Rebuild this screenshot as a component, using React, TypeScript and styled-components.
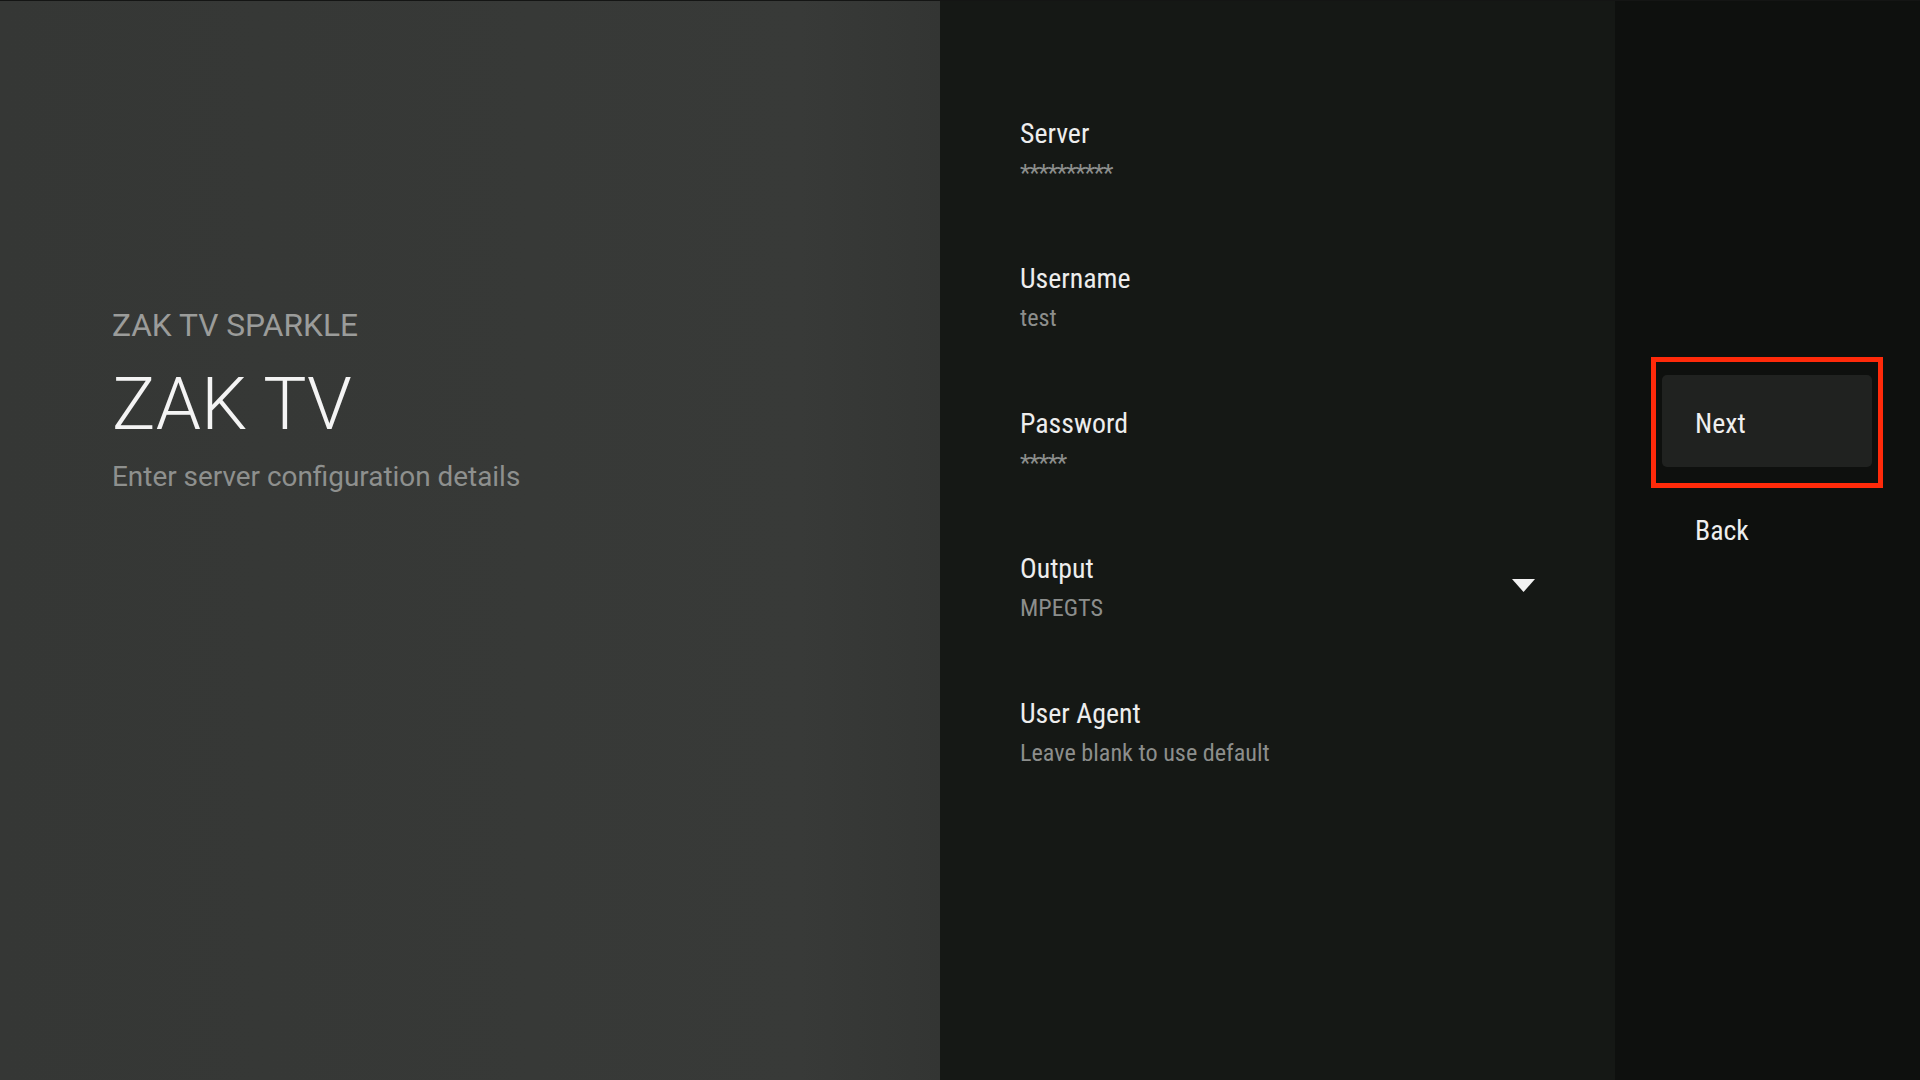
import styled, { createGlobalStyle } from 'styled-components';

const GlobalStyle = createGlobalStyle`
  html, body {
    margin: 0;
    padding: 0;
    width: 100%;
    height: 100%;
    background: #0f110f;
  }
  #root {
    height: 100%;
  }
  * {
    box-sizing: border-box;
  }
`;

const condensed = `"Roboto Condensed", "Liberation Sans Narrow", Roboto, sans-serif`;

type Field = {
  label: string;
  value: string;
  dropdown?: boolean;
};

const fields: Field[] = [
  { label: 'Server', value: '**********' },
  { label: 'Username', value: 'test' },
  { label: 'Password', value: '*****' },
  { label: 'Output', value: 'MPEGTS', dropdown: true },
  { label: 'User Agent', value: 'Leave blank to use default' },
];

const App = () => {
  return (
    <>
      <GlobalStyle />
      <Screen>
        <Guidance>
          <Breadcrumb>ZAK TV SPARKLE</Breadcrumb>
          <Title>ZAK TV</Title>
          <Description>Enter server configuration details</Description>
        </Guidance>
        <ActionsPanel>
          {fields.map((field) => (
            <ActionRow key={field.label}>
              <ActionText>
                <ActionLabel>{field.label}</ActionLabel>
                <ActionValue $masked={field.value.startsWith('*')}>{field.value}</ActionValue>
              </ActionText>
              {field.dropdown && (
                <Caret viewBox="0 0 23 13" aria-hidden="true">
                  <path d="M0 0 H23 L11.5 13 Z" fill="#f2f2f2" />
                </Caret>
              )}
            </ActionRow>
          ))}
        </ActionsPanel>
        <ButtonPanel>
          <FocusFrame>
            <ButtonItem $focused>Next</ButtonItem>
          </FocusFrame>
          <ButtonItem>Back</ButtonItem>
        </ButtonPanel>
      </Screen>
    </>
  );
};

export default App;

const Screen = styled.div`
  width: 100%;
  height: 100vh;
  display: flex;
  border-top: 1px solid #141514;
  overflow: hidden;
`;

const Guidance = styled.div`
  width: 940px;
  flex-shrink: 0;
  padding: 305px 0 0 112px;
  background: linear-gradient(90deg, #353735 0%, #383a38 85%, #333533 100%);
  display: flex;
  flex-direction: column;
  font-family: Roboto, "Noto Sans", sans-serif;
`;

const Breadcrumb = styled.div`
  font-size: 31.7px;
  line-height: 40px;
  color: #9b9c9a;
`;

const Title = styled.div`
  margin-top: 17px;
  font-size: 72.5px;
  font-weight: 300;
  line-height: 84px;
  color: #f4f4f4;
`;

const Description = styled.div`
  margin-top: 12px;
  font-size: 27.9px;
  line-height: 36px;
  color: #8e908e;
`;

const ActionsPanel = styled.div`
  width: 675px;
  flex-shrink: 0;
  padding: 115px 80px 0 80px;
  background: #151815;
  display: flex;
  flex-direction: column;
  font-family: ${condensed};
`;

const ActionRow = styled.div`
  height: 145px;
  display: flex;
  align-items: flex-start;
  justify-content: space-between;
`;

const ActionText = styled.div`
  display: flex;
  flex-direction: column;
  gap: 3px;
`;

const ActionLabel = styled.div`
  font-size: 27.8px;
  line-height: 36px;
  color: #ededed;
`;

const ActionValue = styled.div<{ $masked?: boolean }>`
  font-size: 24.2px;
  line-height: 36px;
  color: #8c8e8c;
  letter-spacing: ${(p) => (p.$masked ? '-1.2px' : '0')};
`;

const Caret = styled.svg`
  width: 23px;
  height: 13px;
  margin-top: 28px;
`;

const ButtonPanel = styled.div`
  flex: 1;
  padding: 356px 0 0 36px;
  background: #0e100e;
  display: flex;
  flex-direction: column;
  font-family: ${condensed};
`;

const FocusFrame = styled.div`
  width: 232px;
  border: 5px solid #ff2a0a;
  padding: 13px 6px 16px 6px;
`;

const ButtonItem = styled.div<{ $focused?: boolean }>`
  height: ${(p) => (p.$focused ? '92px' : '36px')};
  display: flex;
  align-items: center;
  padding-left: ${(p) => (p.$focused ? '33px' : '44px')};
  padding-top: ${(p) => (p.$focused ? '5px' : '0')};
  margin-top: ${(p) => (p.$focused ? '0' : '25px')};
  border-radius: 5px;
  background: ${(p) => (p.$focused ? '#202220' : 'transparent')};
  font-size: 27.8px;
  line-height: 36px;
  color: #efefef;
`;
